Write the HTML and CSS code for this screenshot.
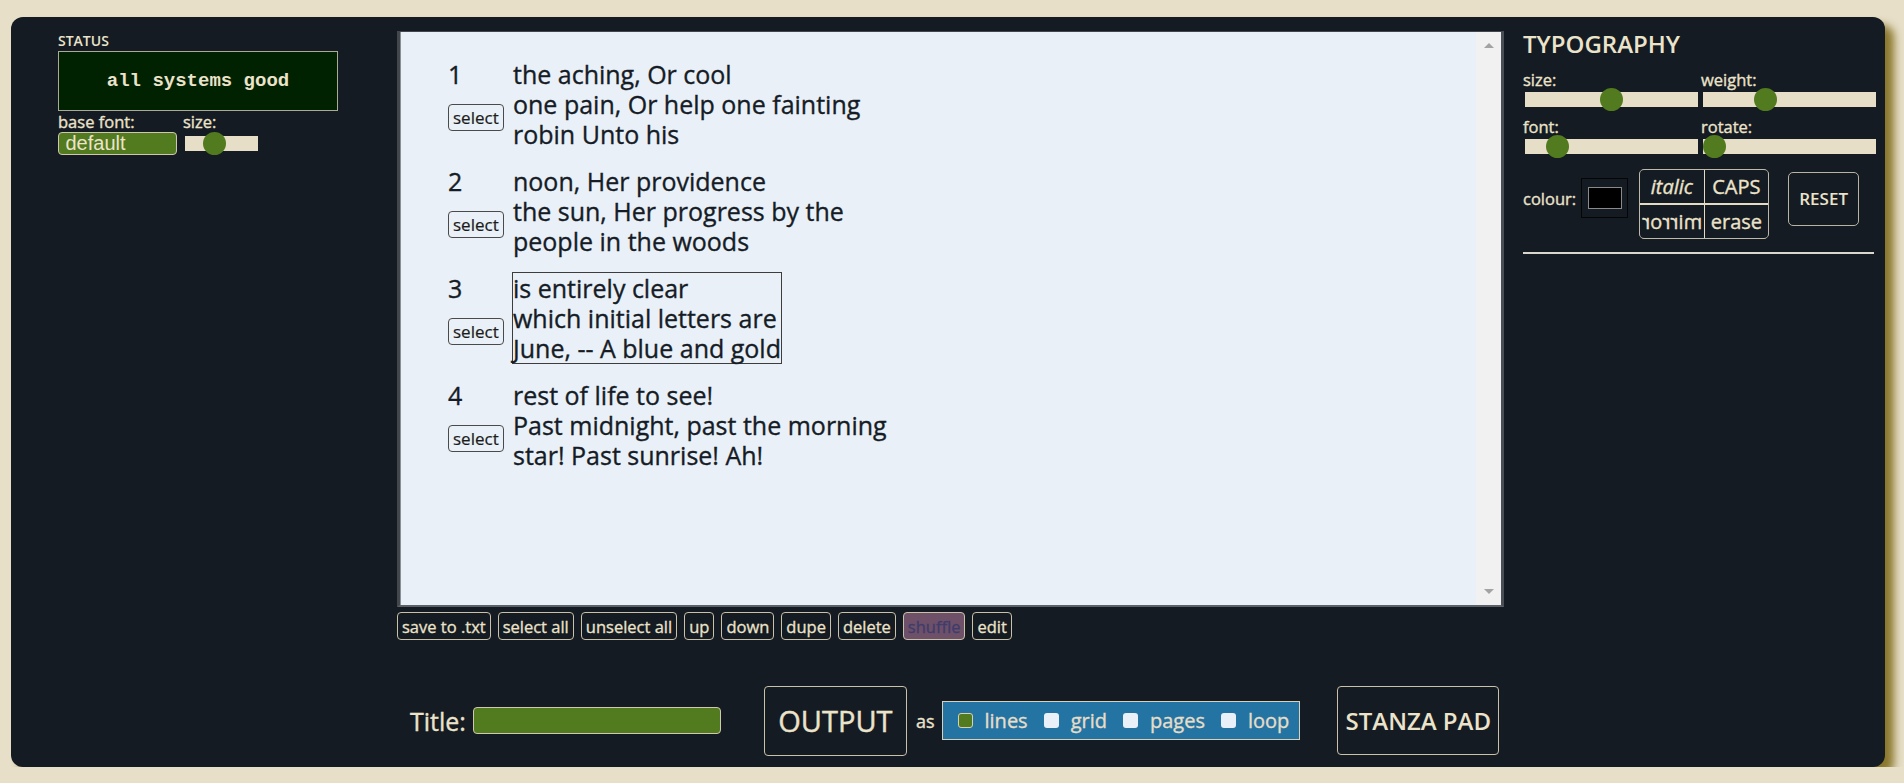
FILE: index.html
```html
<!DOCTYPE html>
<html>
<head>
<meta charset="utf-8">
<link rel="stylesheet" href="styles.css">
</head>
<body>
<div class="app">
  <aside class="left">
    <div class="status-label">STATUS</div>
    <div class="status-box">all systems good</div>
    <div class="base-row">
      <div class="field">
        <div class="lbl">base font:</div>
        <div class="select">default</div>
      </div>
      <div class="field">
        <div class="lbl">size:</div>
        <div class="track small"><span class="thumb" style="left:18px"></span></div>
      </div>
    </div>
  </aside>

  <main class="mid">
    <div class="editor">
      <div class="editor-content">
        <div class="stanza">
          <div class="side"><div class="num">1</div><button class="sel">select</button></div>
          <div class="lines">the aching, Or cool<br>one pain, Or help one fainting<br>robin Unto his</div>
        </div>
        <div class="stanza">
          <div class="side"><div class="num">2</div><button class="sel">select</button></div>
          <div class="lines">noon, Her providence<br>the sun, Her progress by the<br>people in the woods</div>
        </div>
        <div class="stanza">
          <div class="side"><div class="num">3</div><button class="sel">select</button></div>
          <div class="lines selected">is entirely clear<br>which initial letters are<br>June, -- A blue and gold</div>
        </div>
        <div class="stanza">
          <div class="side"><div class="num">4</div><button class="sel">select</button></div>
          <div class="lines">rest of life to see!<br>Past midnight, past the morning<br>star! Past sunrise! Ah!</div>
        </div>
      </div>
      <div class="scrollbar"><span class="arrow up"></span><span class="arrow down"></span></div>
    </div>

    <div class="toolbar">
      <button class="tb">save to .txt</button>
      <button class="tb">select all</button>
      <button class="tb">unselect all</button>
      <button class="tb">up</button>
      <button class="tb">down</button>
      <button class="tb">dupe</button>
      <button class="tb">delete</button>
      <button class="tb shuffle">shuffle</button>
      <button class="tb">edit</button>
    </div>

    <div class="bottom">
      <span class="title-lbl">Title:</span>
      <div class="title-input"></div>
      <button class="big-btn output">OUTPUT</button>
      <span class="as">as</span>
      <div class="modes">
        <div class="mode"><span class="cb on"></span>lines</div>
        <div class="mode"><span class="cb"></span>grid</div>
        <div class="mode"><span class="cb"></span>pages</div>
        <div class="mode"><span class="cb"></span>loop</div>
      </div>
      <button class="big-btn stanza-pad">STANZA PAD</button>
    </div>
  </main>

  <aside class="right">
    <div class="typo-title">TYPOGRAPHY</div>
    <div class="sliders">
      <div class="sfield">
        <div class="lbl">size:</div>
        <div class="track wide"><span class="thumb" style="left:75px"></span></div>
      </div>
      <div class="sfield">
        <div class="lbl">weight:</div>
        <div class="track wide"><span class="thumb" style="left:51px"></span></div>
      </div>
      <div class="sfield">
        <div class="lbl">font:</div>
        <div class="track wide"><span class="thumb" style="left:21px"></span></div>
      </div>
      <div class="sfield">
        <div class="lbl">rotate:</div>
        <div class="track wide"><span class="thumb" style="left:0px"></span></div>
      </div>
    </div>
    <div class="colour-row">
      <div class="lbl colour-lbl">colour:</div>
      <div class="swatch"><div class="swatch-fill"></div></div>
      <div class="styles">
        <div class="cell italic">italic</div>
        <div class="cell">CAPS</div>
        <div class="cell"><span class="mirror">mirror</span></div>
        <div class="cell">erase</div>
      </div>
      <button class="reset">RESET</button>
    </div>
    <div class="rule"></div>
  </aside>
</div>
</body>
</html>
```

FILE: styles.css
```css
* { box-sizing: border-box; }

body {
  margin: 0;
  background: #e7dfc8;
  font-family: "Open Sans", "DejaVu Sans", sans-serif;
}

button {
  font-family: "Open Sans", "DejaVu Sans", sans-serif;
  cursor: pointer;
}

.app {
  margin: 17px 0 0 11px;
  width: 1874px;
  height: 750px;
  background: #151b23;
  border-radius: 12px;
  box-shadow: 9px 8px 8px rgba(128, 108, 28, 0.9);
  display: flex;
  color: #ece3cb;
  -webkit-text-stroke: 0.35px currentColor;
}

/* ---------- left column ---------- */
.left {
  width: 386px;
  padding: 16px 0 0 47px;
}

.status-label {
  font-size: 14px;
  line-height: 16px;
  font-weight: 600;
  -webkit-text-stroke: 0;
  margin-bottom: 2px;
}

.status-box {
  width: 280px;
  height: 60px;
  background: #002200;
  border: 1px solid #a9ab96;
  display: flex;
  align-items: center;
  justify-content: center;
  font-family: "Liberation Mono", "Courier New", monospace;
  font-weight: bold;
  font-size: 19px;
  color: #ece3cb;
  -webkit-text-stroke: 0;
}

.base-row {
  display: flex;
  gap: 6px;
  margin-top: 1px;
}

.lbl {
  font-size: 16.5px;
  line-height: 20px;
}

.select {
  width: 119px;
  height: 23px;
  background: #527a1e;
  border: 1px solid #cfc7ae;
  border-radius: 4px;
  font-family: "Liberation Sans", Arial, sans-serif;
  font-size: 20px;
  line-height: 21px;
  padding-left: 6.5px;
  color: #ece3cb;
  -webkit-text-stroke: 0;
}

.track {
  position: relative;
  height: 15px;
  background: #e6dec7;
  margin-left: 2px;
}

.track.small {
  width: 73px;
  margin-top: 4px;
}

.track.wide {
  width: 173px;
  margin-top: 2px;
}

.thumb {
  position: absolute;
  top: 50%;
  width: 23px;
  height: 23px;
  margin-top: -11.5px;
  border-radius: 50%;
  background: #527a1e;
}

/* ---------- middle column ---------- */
.mid {
  width: 1107px;
  padding-top: 14px;
}

.editor {
  display: flex;
  height: 576px;
  background: #e9f0f7;
  border-left: 3px solid #42474e;
  border-right: 3px solid #4a4f56;
  border-top: 1px solid #42474e;
  border-bottom: 2px solid #5c6168;
  box-shadow: inset 1px 0 0 #8b9096;
}

.editor-content {
  flex: 1;
  padding: 26px 0 0 48px;
}

.scrollbar {
  width: 25px;
  background: #f1f1f1;
  display: flex;
  flex-direction: column;
  justify-content: space-between;
  align-items: center;
  padding: 11px 0 11px;
}

.arrow {
  width: 0;
  height: 0;
  border-left: 5px solid transparent;
  border-right: 5px solid transparent;
}

.arrow.up { border-bottom: 5px solid #a3a3a3; }
.arrow.down { border-top: 5px solid #a3a3a3; }

.stanza {
  display: flex;
  align-items: flex-start;
  margin-bottom: 15px;
  color: #161c26;
}

.side {
  width: 64px;
  padding-top: 1px;
  display: flex;
  flex-direction: column;
  align-items: flex-start;
}

.num {
  font-size: 25px;
  line-height: 30px;
}

.sel {
  margin-top: 15px;
  height: 27px;
  padding: 0 4px;
  border: 1px solid #4a4a4a;
  border-radius: 4px;
  background: transparent;
  color: #1b1b1b;
  font-size: 17px;
  line-height: 24px;
  -webkit-text-stroke: 0.2px currentColor;
}

.lines {
  border: 1px solid transparent;
  font-size: 25px;
  line-height: 30px;
}

.lines.selected {
  border-color: #3d3d3d;
}

.toolbar {
  display: flex;
  gap: 7px;
  margin-top: 5px;
}

.tb {
  height: 28px;
  padding: 0 4px;
  border: 1px solid #c9c1a8;
  border-radius: 4px;
  background: transparent;
  color: #ece3cb;
  font-size: 16.5px;
  line-height: 25px;
  -webkit-text-stroke: 0.3px currentColor;
}

.tb.shuffle {
  background: #6e5068;
  color: #3e3c6c;
}

.bottom {
  display: flex;
  align-items: center;
  height: 71px;
  margin-top: 45px;
  padding-left: 13px;
}

.title-lbl {
  font-size: 25px;
  margin-right: 7px;
}

.title-input {
  width: 248px;
  height: 27px;
  background: #527a1e;
  border: 1px solid #cfc7ae;
  border-radius: 4px;
  margin-right: 43px;
}

.big-btn {
  border: 1px solid #c9c1a8;
  border-radius: 4px;
  background: transparent;
  color: #ece3cb;
  display: flex;
  align-items: center;
  justify-content: center;
  padding: 0;
  -webkit-text-stroke: 0.4px currentColor;
}

.output {
  width: 143px;
  height: 70px;
  font-size: 29px;
  margin-right: 9px;
}

.as {
  font-size: 18px;
  margin-right: 7px;
}

.modes {
  display: flex;
  align-items: center;
  height: 39px;
  background: #2474a3;
  border: 1px solid #d8d2bc;
  padding: 0 10px 0 15px;
  font-size: 20px;
  color: #e6dec8;
}

.mode {
  display: flex;
  align-items: center;
  margin-right: 16px;
}

.mode:last-child { margin-right: 0; }

.cb {
  width: 15px;
  height: 15px;
  border-radius: 3px;
  background: #e9f0f7;
  margin-right: 12px;
}

.cb.on {
  background: #527a1e;
  border: 1px solid #d8d0b0;
}

.stanza-pad {
  width: 162px;
  height: 69px;
  font-size: 24px;
  font-weight: 600;
  -webkit-text-stroke: 0;
  margin-left: 37px;
}

/* ---------- right column ---------- */
.right {
  width: 353px;
  margin-left: 19px;
  padding-top: 13px;
}

.typo-title {
  font-size: 24px;
  line-height: 28px;
  font-weight: 600;
  -webkit-text-stroke: 0;
}

.sliders {
  display: grid;
  grid-template-columns: 175px 175px;
  column-gap: 3px;
  row-gap: 10px;
  margin-top: 12px;
}

.colour-row {
  display: flex;
  align-items: flex-start;
  margin-top: 15px;
}

.colour-lbl {
  margin-top: 19.5px;
  margin-right: 5px;
}

.swatch {
  width: 47px;
  height: 40px;
  margin-top: 9px;
  margin-right: 11px;
  border: 1px solid #050505;
  padding: 8px 0 0 6px;
}

.swatch-fill {
  width: 34px;
  height: 22px;
  background: #000;
  border: 1px solid #8a8a8a;
}

.styles {
  width: 130px;
  height: 70px;
  display: grid;
  grid-template-columns: 1fr 1fr;
  grid-template-rows: 1fr 1fr;
  gap: 2px 1px;
  background: #e3dbc4;
  border: 1px solid #bdb8a8;
  border-radius: 5px;
  overflow: hidden;
  margin-right: 19px;
}

.cell {
  background: #151b23;
  display: flex;
  align-items: center;
  justify-content: center;
  font-size: 20px;
  color: #ece3cb;
}

.cell.italic { font-style: italic; }

.mirror {
  display: inline-block;
  transform: scaleX(-1);
}

.reset {
  width: 71px;
  height: 54px;
  margin-top: 2.7px;
  border: 1px solid #b8b4a4;
  border-radius: 5px;
  background: transparent;
  color: #ece3cb;
  font-size: 17px;
  font-weight: 600;
  -webkit-text-stroke: 0;
  padding: 0;
}

.rule {
  width: 351px;
  height: 2px;
  background: #d9d6cc;
  margin-top: 13px;
}
```
